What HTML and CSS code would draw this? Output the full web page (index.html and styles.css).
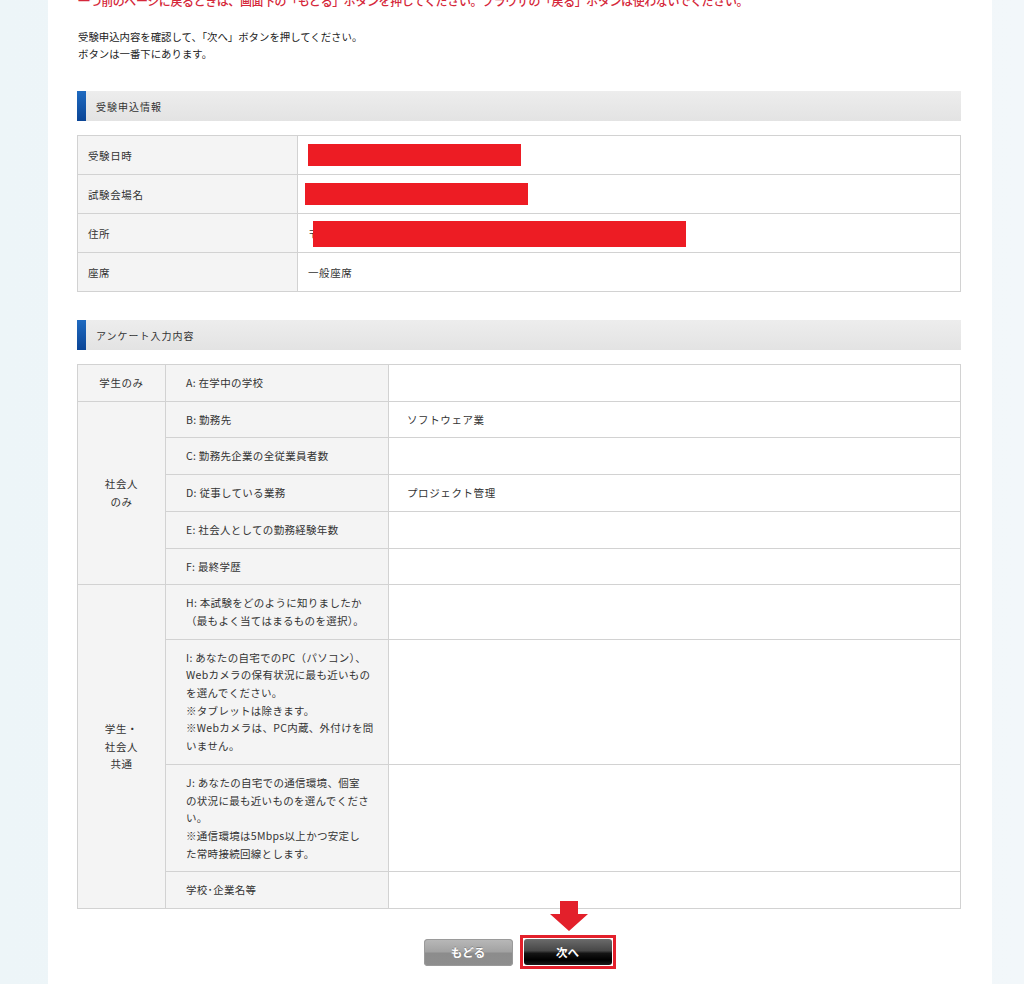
FILE: index.html
```html
<!DOCTYPE html>
<html lang="ja">
<head>
<meta charset="utf-8">
<title>受験申込内容確認</title>
<link rel="stylesheet" href="styles.css">
</head>
<body>
<div class="page">
  <p class="warn">一つ前のページに戻るときは、画面下の「もどる」ボタンを押してください。ブラウザの「戻る」ボタンは使わないでください。</p>
  <p class="intro">受験申込内容を確認して、「次へ」ボタンを押してください。<br>ボタンは一番下にあります。</p>

  <div class="sec-head"><span class="sec-bar"></span><span class="sec-title">受験申込情報</span></div>
  <table class="info">
    <tr><th>受験日時</th><td><span class="redact r1"></span></td></tr>
    <tr><th>試験会場名</th><td><span class="redact r2"></span></td></tr>
    <tr><th>住所</th><td><span class="zip">〒</span><span class="redact r3"></span></td></tr>
    <tr><th>座席</th><td>一般座席</td></tr>
  </table>

  <div class="sec-head sec-head2"><span class="sec-bar"></span><span class="sec-title">アンケート入力内容</span></div>
  <table class="survey">
    <tr><th class="grp">学生のみ</th><th class="q">A: 在学中の学校</th><td></td></tr>
    <tr><th class="grp" rowspan="5">社会人<br>のみ</th><th class="q">B: 勤務先</th><td>ソフトウェア業</td></tr>
    <tr><th class="q">C: 勤務先企業の全従業員者数</th><td></td></tr>
    <tr><th class="q">D: 従事している業務</th><td>プロジェクト管理</td></tr>
    <tr><th class="q">E: 社会人としての勤務経験年数</th><td></td></tr>
    <tr><th class="q">F: 最終学歴</th><td></td></tr>
    <tr><th class="grp" rowspan="4">学生・<br>社会人<br>共通</th><th class="q">H: 本試験をどのように知りましたか<br>（最もよく当てはまるものを選択）。</th><td></td></tr>
    <tr><th class="q">I: あなたの自宅でのPC（パソコン）、<br>Webカメラの保有状況に最も近いもの<br>を選んでください。<br>※タブレットは除きます。<br>※Webカメラは、PC内蔵、外付けを問<br>いません。</th><td></td></tr>
    <tr><th class="q">J: あなたの自宅での通信環境、個室<br>の状況に最も近いものを選んでくださ<br>い。<br>※通信環境は5Mbps以上かつ安定し<br>た常時接続回線とします。</th><td></td></tr>
    <tr><th class="q">学校･企業名等</th><td></td></tr>
  </table>

  <div class="actions">
    <button class="btn btn-back" type="button">もどる</button>
    <div class="next-wrap">
      <svg class="arrow" width="38" height="30" viewBox="0 0 38 30"><path d="M10 0 H28 V13 H38 L19 30 L0 13 H10 Z" fill="#e3202b"/></svg>
      <button class="btn btn-next" type="button">次へ</button>
    </div>
  </div>
</div>
</body>
</html>
```

FILE: styles.css
```css
html, body {
  margin: 0;
  padding: 0;
}
body {
  background: linear-gradient(90deg, #edf5f8 0%, #f2f7fa 100%);
  font-family: "Noto Sans CJK JP", "Liberation Sans", sans-serif;
  color: #333;
}
.page {
  display: flow-root;
  margin-left: 48px;
  width: 944px;
  min-height: 984px;
  box-sizing: border-box;
  background: #fff;
  padding: 0 31px 40px 29px;
}
.warn {
  margin: -5px 0 0 1px;
  font-size: 12px;
  line-height: 12px;
  color: #d5283a;
  font-weight: 500;
  letter-spacing: -0.42px;
  white-space: nowrap;
}
.intro {
  margin: 21px 0 0 1px;
  font-size: 10.4px;
  line-height: 17px;
  color: #222;
}
.sec-head {
  margin-top: 29px;
  height: 30px;
  display: flex;
  align-items: center;
  background: linear-gradient(#ededed, #e3e3e3);
}
.sec-head2 {
  margin-top: 28px;
}
.sec-bar {
  align-self: stretch;
  width: 9px;
  background: linear-gradient(#1f6ac0, #0b4596);
}
.sec-title {
  margin-left: 10px;
  font-size: 10px;
  letter-spacing: 1px;
  color: #333;
}
table {
  width: 884px;
  border-collapse: collapse;
  table-layout: fixed;
  margin-top: 14px;
  border: 1px solid #c4c4c4;
  font-size: 10.5px;
  letter-spacing: 0.6px;
  color: #333;
}
th {
  font-weight: normal;
  text-align: left;
}
.info th, .info td {
  height: 39px;
  padding: 0 10px;
  border: 1px solid #d2d2d2;
  box-sizing: border-box;
  vertical-align: middle;
}
.info th {
  width: 220px;
  background: #f4f4f4;
}
.info td {
  background: #fff;
}
.redact {
  display: inline-block;
  vertical-align: middle;
  background: #ed1c24;
  position: relative;
}
.r1 { width: 213px; height: 22px; }
.r2 { width: 223px; height: 22px; margin-left: -3px; }
.r3 { width: 373px; height: 26px; margin-top: 2px; }
.zip {
  display: inline-block;
  vertical-align: middle;
  font-size: 10px;
  margin-right: -6px;
}
.survey th, .survey td {
  padding: 9px 20px;
  line-height: 17.7px;
  border: 1px solid #d2d2d2;
  vertical-align: middle;
}
.survey .grp {
  width: 87px;
  padding: 9px 0;
  text-align: center;
  background: #f4f4f4;
}
.survey .q {
  width: 192px;
  padding-right: 10px;
  background: #f4f4f4;
  white-space: nowrap;
  letter-spacing: 0.3px;
}
.survey td {
  padding-left: 18px;
  background: #fff;
}
.actions {
  margin-top: 26px;
  display: flex;
  justify-content: center;
  align-items: center;
  gap: 7px;
  padding-left: 1px;
}
.btn {
  font-family: "Noto Sans CJK JP", sans-serif;
  font-size: 11.5px;
  font-weight: bold;
  color: #fff;
  border: none;
  padding: 0;
  cursor: pointer;
  display: block;
}
.btn-back {
  width: 89px;
  height: 27px;
  border-radius: 4px;
  background: linear-gradient(#b9b9b9 0%, #a2a2a2 48%, #8c8c8c 52%, #8e8e8e 100%);
  box-shadow: inset 0 0 0 1px #9a9a9a;
  text-shadow: 0 -1px 0 rgba(0,0,0,0.25);
}
.next-wrap {
  position: relative;
  border: 3px solid #e3202b;
  padding: 1px;
}
.btn-next {
  width: 88px;
  height: 26px;
  border-radius: 3px;
  background: linear-gradient(#6b6b6b 0%, #474747 45%, #141414 55%, #000 80%, #1a1a1a 100%);
}
.arrow {
  position: absolute;
  left: 27px;
  top: -37px;
}
```
